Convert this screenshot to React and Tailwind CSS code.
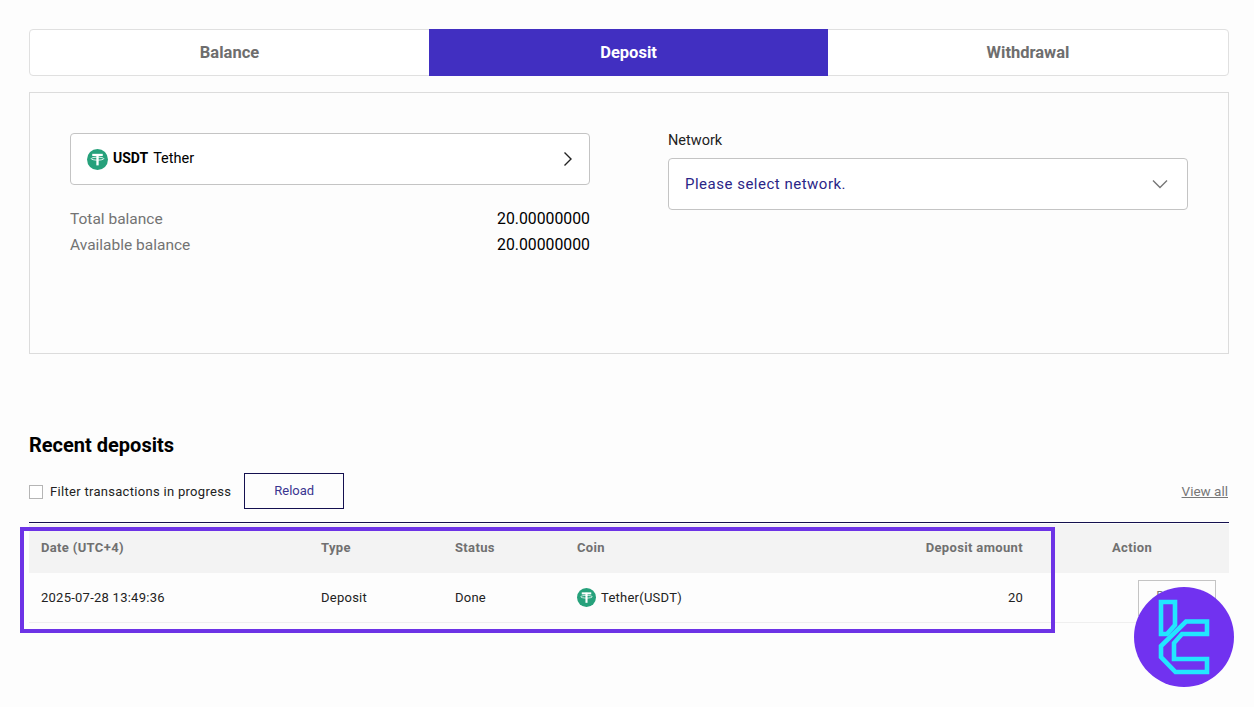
function TetherIcon({ className }) {
  return (
    <svg viewBox="0 0 20 20" className={className}>
      <circle cx="10" cy="10" r="10" fill="#26a17b" />
      <rect x="5" y="4.6" width="10" height="2.1" fill="#fff" />
      <rect x="8.9" y="5" width="2.2" height="10.6" fill="#fff" />
      <ellipse cx="10" cy="9.2" rx="6" ry="1.4" fill="none" stroke="#fff" strokeWidth="0.8" />
    </svg>
  );
}

function Logo() {
  return (
    <svg viewBox="0 0 100 100" className="h-full w-full">
      <circle cx="50" cy="50" r="50" fill="#7132f0" />
      <g fill="none" stroke="#22e6ff" strokeWidth="4.6">
        <path d="M27 15H41V38L33 47H27Z" />
        <path d="M73 34.5H52L27 59V70L41.5 85H73V72H40V56L48 47H73Z" />
      </g>
    </svg>
  );
}

function Tab({ label, active }) {
  return (
    <div
      className={
        active
          ? "-my-px flex items-center justify-center bg-[#412fc1] pt-[1px] text-white font-bold"
          : "flex items-center justify-center pt-[1px] text-[#6e6e6e] font-bold"
      }
    >
      {label}
    </div>
  );
}

export default function App() {
  return (
    <div className="relative h-[707px] overflow-hidden bg-[#fdfdfd] pt-[29px] pl-[29px] pr-[25px] font-[Roboto,sans-serif] text-black">
      <div className="grid h-[47px] grid-cols-[399px_399px_1fr] rounded-[4px] border border-[#e0e0e0] bg-white text-[16.5px]">
        <Tab label="Balance" />
        <Tab label="Deposit" active />
        <Tab label="Withdrawal" />
      </div>

      <div className="mt-4 flex h-[262px] gap-[78px] border border-[#dcdcdc] px-10 pt-10">
        <div className="w-[520px]">
          <div className="flex h-[52px] items-center justify-between rounded-[4px] border border-[#c4c4c4] bg-white pl-4 pr-4">
            <div className="flex items-center gap-[5px]">
              <TetherIcon className="h-[21px] w-[21px]" />
              <span className="-mt-[1px] text-[14px] font-bold">USDT</span>
              <span className="-mt-[1px] text-[14.5px]">Tether</span>
            </div>
            <svg viewBox="0 0 10 16" className="h-4 w-[10px]" fill="none" stroke="#222" strokeWidth="1.4">
              <path d="M1.5 1.5L8 8L1.5 14.5" />
            </svg>
          </div>
          <div className="mt-[21px] flex h-[26px] items-center justify-between">
            <span className="pt-[1px] text-[15.5px] text-[#737373]">Total balance</span>
            <span className="text-[15.8px]">20.00000000</span>
          </div>
          <div className="flex h-[26px] items-center justify-between">
            <span className="pt-[1px] text-[15.5px] text-[#737373]">Available balance</span>
            <span className="text-[15.8px]">20.00000000</span>
          </div>
        </div>

        <div className="w-[520px]">
          <div className="-mt-[3px] mb-[7px] text-[14.5px] leading-[21px] text-[#222]">Network</div>
          <div className="flex h-[52px] items-center justify-between rounded-[4px] border border-[#c4c4c4] bg-white pl-4 pr-[19px]">
            <span className="text-[15px] tracking-[0.5px] text-[#2a2587]">Please select network.</span>
            <svg viewBox="0 0 16 10" className="h-[10px] w-4" fill="none" stroke="#777" strokeWidth="1.4">
              <path d="M1 1.5L8 8.5L15 1.5" />
            </svg>
          </div>
        </div>
      </div>

      <h2 className="mt-[78px] text-[20px] font-bold leading-[26px]">Recent deposits</h2>

      <div className="mt-[15px] flex h-9 items-center">
        <div className="mt-[2px] h-[14px] w-[14px] border border-[#b5b5b5] bg-white" />
        <span className="ml-[7px] mt-[1px] text-[13px] tracking-[0.3px] text-[#222]">Filter transactions in progress</span>
        <button className="ml-[13px] h-9 w-[100px] border border-[#14104f] text-[13px] text-[#3a3590]">Reload</button>
        <a className="ml-auto mr-[1px] mt-[1px] text-[13.5px] text-[#777] underline">View all</a>
      </div>

      <div className="mt-[13px] border-t border-[#14104f] pt-[1px] text-[13px]">
        <div className="grid h-[49px] grid-cols-[280px_134px_122px_470px_194px] items-center bg-[#f3f3f3] pb-[2px] font-bold tracking-[0.35px] text-[#707070]">
          <div className="pl-3">Date (UTC+4)</div>
          <div className="pl-3">Type</div>
          <div className="pl-3">Status</div>
          <div className="flex justify-between px-3">
            <span>Coin</span>
            <span>Deposit amount</span>
          </div>
          <div className="text-center">Action</div>
        </div>
        <div className="grid h-[50px] grid-cols-[280px_134px_122px_470px_194px] items-center border-b border-[#efefef] tracking-[0.25px] text-[#222]">
          <div className="pl-3">2025-07-28 13:49:36</div>
          <div className="pl-3">Deposit</div>
          <div className="pl-3">Done</div>
          <div className="flex items-center justify-between px-3">
            <span className="flex items-center gap-[5px]">
              <TetherIcon className="h-[19px] w-[19px]" />
              Tether(USDT)
            </span>
            <span>20</span>
          </div>
          <div className="flex justify-end pr-[13px]">
            <button className="h-[36px] w-[78px] border border-[#c4c4c4] pb-[3px] text-[#777]">Details</button>
          </div>
        </div>
      </div>

      {/* annotation box and watermark sit on top of the table */}
      <div className="absolute left-[20px] top-[527px] h-[106px] w-[1035px] border-[4px] border-[#6d33e6]" />
      <div className="absolute left-[1134px] top-[587px] h-[100px] w-[100px]">
        <Logo />
      </div>
    </div>
  );
}
